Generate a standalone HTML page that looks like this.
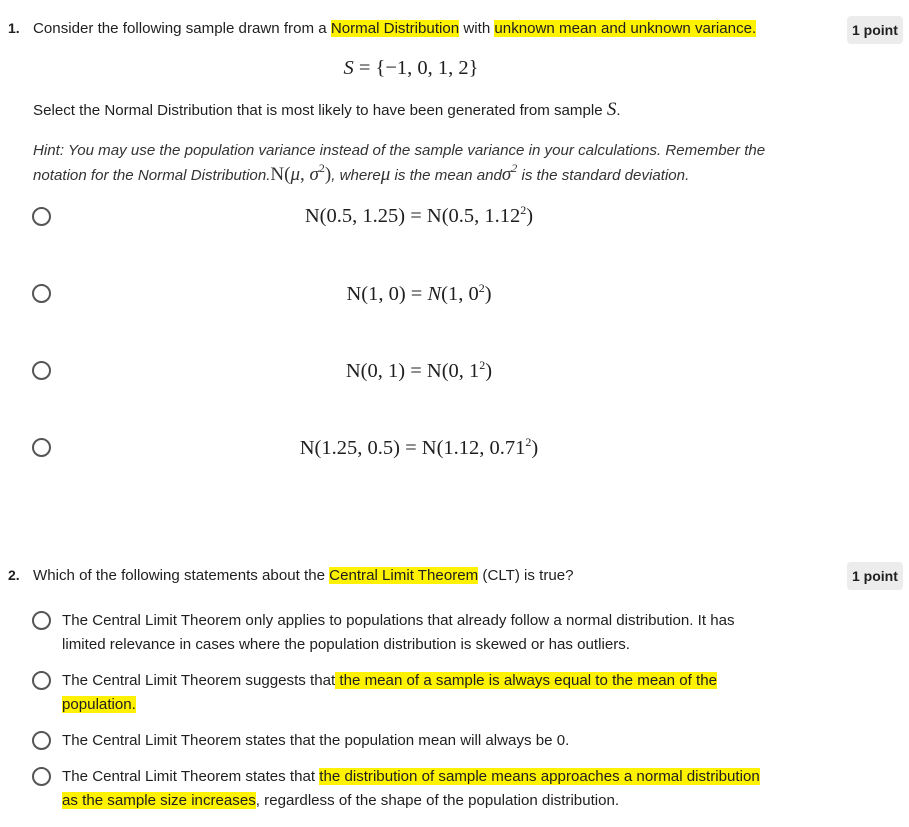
<!DOCTYPE html>
<html><head><meta charset="utf-8"><style>
body{margin:0;width:909px;height:827px;background:#fff;position:relative;overflow:hidden;font-family:"Liberation Sans",sans-serif;color:#1f1f1f;font-size:15.1px}
.a{position:absolute;white-space:nowrap;line-height:20px}
.hl{background:#fff200}
.num{font-weight:bold;font-size:14px}
.badge{position:absolute;background:#ececec;border-radius:4px;font-weight:bold;font-size:14px;padding:0 5px;line-height:28px;color:#1f1f1f}
.r{position:absolute;width:15px;height:15px;border:2px solid #555;border-radius:50%;box-sizing:content-box}
.m{position:absolute;font-family:"Liberation Serif",serif;font-size:20.5px;white-space:nowrap;transform:translateX(-50%);line-height:24px}
.i{font-style:italic}
sup{font-size:12px;vertical-align:8px;line-height:0}
.h{font-style:italic;color:#333}
</style></head><body>
<div class="a num" style="left:8px;top:18px">1.</div>
<div class="a" style="left:33px;top:19px">Consider the following sample drawn from a <span class="hl">Normal Distribution</span> with <span class="hl">unknown mean and unknown variance.</span></div>
<div class="badge" style="left:847px;top:16px">1 point</div>
<div class="m" style="left:411px;top:56px"><span class="i">S</span> = {−1, 0, 1, 2}</div>
<div class="a" style="left:33px;top:100px">Select the Normal Distribution that is most likely to have been generated from sample <span class="i" style="font-family:'Liberation Serif',serif;font-size:19px">S</span>.</div>
<div class="a h" style="left:33px;top:141px">Hint: You may use the population variance instead of the sample variance in your calculations. Remember the</div>
<div class="a h" style="left:33px;top:165px">notation for the Normal Distribution.<span style="font-family:'Liberation Serif',serif;font-style:normal;font-size:19px">N(<i>μ</i>, <i>σ</i><sup>2</sup>)</span>, where<span style="font-family:'Liberation Serif',serif;font-size:19px">μ</span> is the mean and<span style="font-family:'Liberation Serif',serif;font-size:19px">σ<sup>2</sup></span> is the standard deviation.</div>

<div class="r" style="left:32px;top:207px"></div>
<div class="m" style="left:419px;top:204px">N(0.5, 1.25) = N(0.5, 1.12<sup>2</sup>)</div>
<div class="r" style="left:32px;top:284px"></div>
<div class="m" style="left:419px;top:282px">N(1, 0) = <i>N</i>(1, 0<sup>2</sup>)</div>
<div class="r" style="left:32px;top:361px"></div>
<div class="m" style="left:419px;top:359px">N(0, 1) = N(0, 1<sup>2</sup>)</div>
<div class="r" style="left:32px;top:438px"></div>
<div class="m" style="left:419px;top:436px">N(1.25, 0.5) = N(1.12, 0.71<sup>2</sup>)</div>

<div class="a num" style="left:8px;top:565px">2.</div>
<div class="a" style="left:33px;top:566px">Which of the following statements about the <span class="hl">Central Limit Theorem</span> (CLT) is true?</div>
<div class="badge" style="left:847px;top:562px">1 point</div>

<div class="r" style="left:32px;top:611px"></div>
<div class="a" style="left:62px;top:611px">The Central Limit Theorem only applies to populations that already follow a normal distribution. It has</div>
<div class="a" style="left:62px;top:635px">limited relevance in cases where the population distribution is skewed or has outliers.</div>
<div class="r" style="left:32px;top:671px"></div>
<div class="a" style="left:62px;top:671px">The Central Limit Theorem suggests that<span class="hl"> the mean of a sample is always equal to the mean of the </span></div>
<div class="a" style="left:62px;top:695px"><span class="hl">population.</span></div>
<div class="r" style="left:32px;top:731px"></div>
<div class="a" style="left:62px;top:731px">The Central Limit Theorem states that the population mean will always be 0.</div>
<div class="r" style="left:32px;top:767px"></div>
<div class="a" style="left:62px;top:767px">The Central Limit Theorem states that <span class="hl">the distribution of sample means approaches a normal distribution </span></div>
<div class="a" style="left:62px;top:791px"><span class="hl">as the sample size increases</span>, regardless of the shape of the population distribution.</div>
</body></html>
